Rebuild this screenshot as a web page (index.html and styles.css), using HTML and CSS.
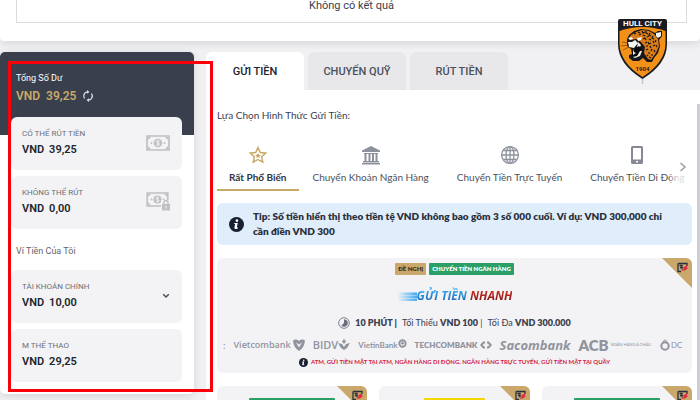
FILE: index.html
```html
<!DOCTYPE html>
<html lang="vi">
<head>
    <meta charset="UTF-8">
    <meta name="viewport" content="width=device-width, initial-scale=1.0">
    <title>Gửi Tiền</title>
    <link rel="stylesheet" href="styles.css">
</head>
<body>

    <!-- Shared icons -->
    <svg class="sprite" aria-hidden="true">
        <symbol id="money" viewBox="0 0 24 16">
            <path fill="none" stroke="currentColor" stroke-width="1.700" d="M1 1h22v14H1z"/>
            <path fill="currentColor" d="M2 2h3L2 5zM22 2h-3l3 3zM2 14h3l-3-3zM22 14h-3l3-3z"/>
            <circle cx="12" cy="8" r="4.3" fill="currentColor"/>
            <path d="M13.7 6.3c-.7-.8-3.3-.8-3.3.5 0 1.4 3.3.9 3.3 2.4 0 1.3-2.6 1.4-3.4.4M12 4.8v6.4" fill="none" stroke="#f3f3f5" stroke-width=".9"/>
            <circle cx="5.5" cy="8" r="1" fill="currentColor"/><circle cx="18.5" cy="8" r="1" fill="currentColor"/>
        </symbol>
        <symbol id="info" viewBox="0 0 16 16">
            <circle cx="8" cy="8" r="8" fill="#182033"/>
            <path fill="#fff" d="M8.500 2.500a1.400 1.400 0 1 1-.1 2.800 1.400 1.400 0 0 1 .1-2.800zM5.700 6.300h3.700l-1 4.400c-.1.6.2.7 1.200.2l-.3 1.300c-1.500 1-4 1-3.500-1.200l.8-3.500H5.500z"/>
        </symbol>
        <symbol id="corner" viewBox="0 0 30 30">
            <path d="M0 0h24a6 6 0 0 1 6 6v24z" fill="#caa76a"/>
            <path d="M16 5.500h9v2.500M16 5.500v8h3M17.500 7.500h2.500v2h-2M20 9.500v2" fill="none" stroke="#29303f" stroke-width="1.300"/>
            <path d="M25 7l-4.500 3 1.500.7-2.500 2.600 4.500-1.200.7-1.400 1.300-.2-1-1z" fill="#e02a45"/>
        </symbol>
    </svg>

    <section class="results">
        <div class="results-box">Không có kết quả</div>
    </section>

    <div class="layout">
        <aside class="wallet">
            <div class="wallet-head">
                <div class="wallet-title">Tổng Số Dư</div>
                <div class="wallet-total">
                    <span>VND</span><span>39,25</span>
                    <button class="refresh" type="button" aria-label="Làm mới">
                        <svg viewBox="0 0 12 12"><path d="M2.500 8.500A4.200 4.200 0 0 1 5.500 1.900M9.500 3.500A4.200 4.200 0 0 1 6.500 10.100" fill="none" stroke="#dfe1e6" stroke-width="1.300"/><path d="M5 0l2.500 1.900L5 3.800zM7 8.200L4.500 10.100 7 12z" fill="#dfe1e6"/></svg>
                    </button>
                </div>
            </div>
            <div class="wallet-body">
                <div class="balance">
                    <div>
                        <div class="balance-label">CÓ THỂ RÚT TIỀN</div>
                        <div class="balance-value"><span>VND</span><span>39,25</span></div>
                    </div>
                    <svg class="money" viewBox="0 0 24 16"><use href="#money"/></svg>
                </div>
                <div class="balance">
                    <div>
                        <div class="balance-label">KHÔNG THỂ RÚT</div>
                        <div class="balance-value"><span>VND</span><span>0,00</span></div>
                    </div>
                    <svg class="money money-locked" viewBox="0 0 24 19">
                        <use href="#money" width="23" height="15"/>
                        <path d="M15 8h9v11h-9z" fill="#f3f3f5"/>
                        <path d="M16 12h8v6.500h-8z" fill="currentColor"/>
                        <path d="M18 12v-1.500a2 2 0 0 1 4 0V12" fill="none" stroke="currentColor" stroke-width="1.300"/>
                        <path d="M20 14v2.500" stroke="#f3f3f5"/>
                    </svg>
                </div>
                <h2 class="wallet-subtitle">Ví Tiền Của Tôi</h2>
                <div class="balance">
                    <div>
                        <div class="balance-label">TÀI KHOẢN CHÍNH</div>
                        <div class="balance-value"><span>VND</span><span>10,00</span></div>
                    </div>
                    <button class="expand" type="button" aria-label="Mở rộng">
                        <svg viewBox="0 0 8 6"><path d="M1.200 1.200L4 4l2.800-2.800" fill="none" stroke="#4a4f5c" stroke-width="1.500"/></svg>
                    </button>
                </div>
                <div class="balance">
                    <div>
                        <div class="balance-label">M THỂ THAO</div>
                        <div class="balance-value"><span>VND</span><span>29,25</span></div>
                    </div>
                </div>
            </div>
        </aside>

        <main class="cashier">
            <nav class="tabs">
                <button class="tab active" type="button">GỬI TIỀN</button>
                <button class="tab" type="button">CHUYỂN QUỸ</button>
                <button class="tab" type="button">RÚT TIỀN</button>
            </nav>
            <div class="panel">
                <h1 class="panel-title">Lựa Chọn Hình Thức Gửi Tiền:</h1>

                <div class="methods-wrap">
                    <div class="methods">
                        <button class="method active" type="button">
                            <svg viewBox="0 0 20 20"><path d="M10 2.500l2.300 5 5.500.6-4.100 3.700 1.100 5.400-4.800-2.700-4.800 2.700 1.100-5.400-4.100-3.700 5.500-.6z" fill="none" stroke="#c9a55f" stroke-width="1.400"/><path d="M10 8l.9 1.700 1.900.2-1.400 1.300.4 1.900-1.800-1-1.800 1 .4-1.900-1.400-1.300 1.900-.2z" fill="#c9a55f"/></svg>
                            <span>Rất Phổ Biến</span>
                        </button>
                        <button class="method" type="button">
                            <svg viewBox="0 0 20 20"><path d="M1 5.500L10 1l9 4.500V7H1zM3 8h14v1H3zM3.500 9h2v7h-2zM7.500 9h2v7h-2zM11 9h2v7h-2zM14.500 9h2v7h-2zM2 16h16v1.500H2zM1 18h18v1.500H1z" fill="#8d919c"/></svg>
                            <span>Chuyển Khoản Ngân Hàng</span>
                        </button>
                        <button class="method" type="button">
                            <svg viewBox="0 0 20 20"><g fill="none" stroke="#8d919c" stroke-width="1.300"><circle cx="10" cy="10" r="8.400"/><ellipse cx="10" cy="10" rx="4" ry="8.400"/><path d="M10 1.500v17M1.500 10h17M3.200 5.500h13.600M3.200 14.500h13.600"/></g></svg>
                            <span>Chuyển Tiền Trực Tuyến</span>
                        </button>
                        <button class="method" type="button">
                            <svg viewBox="0 0 20 20"><path fill-rule="evenodd" d="M5.500 1h9a1.500 1.500 0 0 1 1.500 1.500v15a1.500 1.500 0 0 1-1.500 1.500h-9A1.500 1.500 0 0 1 4 17.500v-15A1.500 1.500 0 0 1 5.500 1zM6 3v11.500h8V3zM9 16v1.500h2V16z" fill="#858995"/></svg>
                            <span>Chuyển Tiền Di Động</span>
                        </button>
                    </div>
                    <button class="next" type="button" aria-label="Tiếp theo">
                        <svg viewBox="0 0 8 10"><path d="M1.500 1L6 5 1.500 9" fill="none" stroke="#9a9da5" stroke-width="1.500"/></svg>
                    </button>
                </div>

                <div class="tip">
                    <svg class="tip-icon"><use href="#info"/></svg>
                    <p>Tip: Số tiền hiển thị theo tiền tệ VND không bao gồm 3 số 000 cuối. Ví dụ: VND 300,000 chỉ cần điền VND 300</p>
                </div>

                <article class="offer">
                    <svg class="corner"><use href="#corner"/></svg>
                    <div class="badges">
                        <span class="badge gold">ĐỀ NGHỊ</span>
                        <span class="badge green">CHUYỂN TIỀN NGÂN HÀNG</span>
                    </div>
                    <div class="offer-logo">
                        <span class="speed"></span>
                        <span class="logo-blue">GỬI TIỀN</span>
                        <span class="logo-red">NHANH</span>
                    </div>
                    <div class="limits">
                        <svg viewBox="0 0 14 14"><circle cx="7" cy="7" r="6.200" fill="none" stroke="#6b707c"/><path d="M7 2.500A4.500 4.500 0 1 1 3.800 10.200L7 7z" fill="#6b707c"/></svg>
                        <b>10 PHÚT |</b>
                        <span>Tối Thiểu <b>VND 100</b> |</span>
                        <span>Tối Đa <b>VND 300.000</b></span>
                    </div>
                    <div class="banks">
                        <span class="bank">:</span>
                        <span class="bank vietcom">Vietcombank <svg viewBox="0 0 12 12"><path fill="currentColor" d="M0 1.500Q3-.5 6 2q3-2.500 6-.5-.5 7-6 10.500Q.5 8.500 0 1.500z"/><path d="M3 3.500l3 2 3-2-3 5z" fill="#f3f3f6"/></svg></span>
                        <span class="bank bidv">BIDV<svg viewBox="0 0 12 12"><path fill="currentColor" d="M6 0l2 2.500L6 5 4 2.500zM0 4l4 1 2 3 2-3 4-1-3 5-3 2-3-2z"/></svg></span>
                        <span class="bank vietin">VietinBank<svg viewBox="0 0 12 12"><circle cx="6" cy="6" r="4.300" fill="none" stroke="currentColor" stroke-width="2.500"/><path d="M6 3l2.500 3L6 7.500 3.500 6z" fill="currentColor"/></svg></span>
                        <span class="bank techcom">TECHCOMBANK <svg viewBox="0 0 12 8"><path fill="none" stroke="currentColor" stroke-width="2" d="M5 1.500H3.500L1.300 4l2.200 2.500H5M7 1.500h1.500L10.700 4 8.500 6.500H7"/></svg></span>
                        <span class="bank sacom">Sacombank</span>
                        <span class="bank acb">ACB <small>NGÂN HÀNG Á CHÂU</small></span>
                        <span class="bank dong"><svg viewBox="0 0 12 12"><circle cx="6" cy="7" r="3.700" fill="none" stroke="currentColor" stroke-width="2"/><path d="M3.500 3L6 .8 8.500 3" fill="none" stroke="currentColor"/></svg>DC</span>
                    </div>
                    <div class="notice">
                        <svg><use href="#info"/></svg>
                        <span>ATM, GỬI TIỀN MẶT TẠI ATM, NGÂN HÀNG DI ĐỘNG, NGÂN HÀNG TRỰC TUYẾN, GỬI TIỀN MẶT TẠI QUẦY</span>
                    </div>
                </article>

                <div class="offer-grid">
                    <article class="mini"><svg class="corner"><use href="#corner"/></svg><span class="strip strip-green"></span></article>
                    <article class="mini"><svg class="corner"><use href="#corner"/></svg><span class="strip strip-yellow"></span></article>
                    <article class="mini"><svg class="corner"><use href="#corner"/></svg><span class="strip strip-green"></span></article>
                </div>
            </div>
        </main>
        <div class="scroll-track"><div class="scroll-thumb"></div></div>
    </div>

    <div class="highlight"></div>

    <!-- Club crest -->
    <svg class="crest" viewBox="0 0 49 65" role="img" aria-label="Hull City 1904">
        <path d="M24.500 57v8" stroke="#c4c5c9" stroke-width="1.500"/>
        <path d="M2 0h45a2 2 0 0 1 2 2v23q0 20-24.500 35Q0 45 0 25V2a2 2 0 0 1 2-2z" fill="#191b20"/>
        <path d="M1.500 12Q24.500 4 47.500 12v13Q47 43.500 24.500 58 2 43.500 1.500 25z" fill="#f39018"/>
        <text x="24.500" y="7" text-anchor="middle" class="crest-name">HULL CITY</text>
        <!-- head -->
        <path d="M9 20l2-4 5-4 7-2 8 1 6 3 3-2h4l0 5-3 4 1 6-2 7-4 5-2 4-5 0-4-4-4 3-6 0-4-3 0-3 3-1-1-5-4-3z" fill="#17181c"/>
        <path d="M11 19l2-3 5-3 6-2 7 1 5 3 4 5 1 7-3 7-3 4-2 3-3-1-4-6 1-6-4-5-5-3-6 1z" fill="#d97b18"/>
        <!-- ear, brow and muzzle -->
        <path d="M38 14l5-1 0 4-3 2-2-2z" fill="#f6f5f0"/>
        <path d="M10 19l4-1 1 2-3 1zM19 19l5-1-1 3-3 1zM10 23l4 0 3-2 3 3-4 5-5-1zM20 23l3 3-1 2-3 1z" fill="#f6f5f0"/>
        <path d="M15 31l6-4 2 2-1 5-4 4-4-2z" fill="#07080b"/>
        <path d="M15 30l1 3 2 1-3 2zM22 32l2 0-2 5-5 2-2-1 4-1z" fill="#f2eee5"/>
        <!-- spots -->
        <path d="M16 15l2-1M20 13l2 1M21 16l2-1M24 12l1 2 2-1M28 12l0 2 2 1M32 14l-1 2 2 1M25 16l2 1M29 18l2-1M25 20l2-1 1 2M31 20l2 1M35 17l-1 2 2 1M27 24l2-1M30 23l1 2 2-1M35 22l1 2M38 21l-1 2M28 27l2 0M32 27l1 2M35 27l2-1M38 26l1 2M28 31l2-1M30 34l2 0M33 32l1-2M36 31l1 2M29 36l1 1M33 36l2 0M31 38l2 1" fill="none" stroke="#17181c" stroke-width="1.200"/>
        <path d="M4 23l6 1M3 27l8-1M5 31l6-3" fill="none" stroke="#56391b" stroke-width=".6"/>
        <text x="24.500" y="52" text-anchor="middle" class="crest-year">1904</text>
    </svg>

</body>
</html>
```
FILE: styles.css
```css
* { box-sizing: border-box; }
body {
    margin: 0;
    height: 100vh;
    overflow: hidden;
    position: relative;
    font-family: Lato, "Noto Sans", sans-serif;
    font-size: 10px;
    color: #3a404d;
    background: #f1f1f4;
}
h1, h2, p { margin: 0; font-weight: 400; }
button {
    border: 0;
    padding: 0;
    background: none;
    font: inherit;
    color: inherit;
    cursor: pointer;
}
svg { display: block; flex: none; }
.sprite { position: absolute; width: 0; height: 0; }

/* Results */
.results {
    padding: 0 13px 18px 16px;
    background: #fff;
    border-radius: 0 0 4px 4px;
    box-shadow: 0 2px 8px rgba(0, 0, 0, 0.12);
}
.results-box {
    padding-bottom: 11px;
    font-family: Roboto, sans-serif;
    font-size: 11px;
    line-height: 11px;
    text-align: center;
    border: 1px solid #dcdcde;
    border-top: 0;
}

.layout {
    display: flex;
    align-items: flex-start;
    margin-top: 11px;
}

/* Wallet */
.wallet {
    width: 28%;
    max-width: 194px;
    flex: none;
    margin-right: 12px;
    padding-bottom: 12px;
    background: #fff;
    border-radius: 5px;
    box-shadow: 0 2px 8px rgba(0, 0, 0, 0.12);
    font-family: Roboto, sans-serif;
}
.wallet-head {
    padding: 20px 16px 30px;
    background: #3a3f4e;
    border-radius: 5px 5px 0 0;
    color: #fff;
}
.wallet-title { font-size: 9px; line-height: 12px; }
.wallet-total {
    display: flex;
    align-items: center;
    gap: 6px;
    margin-top: 3px;
    font-size: 12px;
    line-height: 18px;
    font-weight: 600;
    color: #c9a968;
}
.refresh svg { width: 12px; height: 12px; }
.wallet-body {
    display: flex;
    flex-direction: column;
    gap: 6px;
    margin-top: -18px;
    padding: 0 12px 0 11px;
}
.balance {
    display: flex;
    align-items: center;
    justify-content: space-between;
    padding: 10px 12px 12px 11px;
    background: #f3f3f5;
    border-radius: 6px;
}
.balance-label { font-size: 8px; line-height: 14px; color: #6c6f78; }
.balance-value {
    display: flex;
    gap: 5px;
    font-size: 11px;
    line-height: 17px;
    font-weight: 600;
    color: #20242d;
}
.money { width: 24px; height: 16px; color: #bfc0c4; }
.money-locked { height: 19px; }
.wallet-subtitle { padding: 9px 5px 6px; font-size: 9px; line-height: 14px; color: #61656e; }
.expand svg { width: 8px; height: 6px; }

/* Cashier */
.cashier { flex: 1; min-width: 0; }
.tabs { display: flex; gap: 4px; }
.tab {
    flex: 0 1 98px;
    height: 38px;
    background: #e8e8ea;
    border-radius: 6px 6px 0 0;
    font-family: Roboto, sans-serif;
    font-size: 11px;
    font-weight: 500;
    color: #4b505d;
}
.tab.active { background: #fff; color: #20242d; }
.panel { padding: 17px 5px 0 11px; background: #fff; }
.panel-title { font-size: 10px; line-height: 16px; }
.methods-wrap { position: relative; margin-top: 22px; overflow: hidden; }
.methods { display: flex; }
.method {
    display: flex;
    flex: none;
    flex-direction: column;
    align-items: center;
    gap: 5px;
    padding: 0 14px 5px;
    line-height: 14px;
    white-space: nowrap;
    border-bottom: 2px solid transparent;
    color: #4c515d;
}
.method.active { padding: 0 12px 5px; font-weight: 700; color: #30353f; border-color: #c9a968; }
.method svg { width: 20px; height: 20px; }
.next {
    position: absolute;
    right: 0;
    top: 0;
    width: 22px;
    height: 44px;
    padding-left: 9px;
    background: linear-gradient(90deg, rgba(255, 255, 255, 0.3), rgba(255, 255, 255, 0.8) 40%);
}
.next svg { width: 8px; height: 10px; }
.tip {
    display: flex;
    align-items: center;
    gap: 9px;
    margin-top: 12px;
    padding: 6px 18px 6px 12px;
    background: #e0edfa;
    border-radius: 6px;
    line-height: 15px;
    color: #2a303c;
}
.tip p { font-weight: 800; }
.tip-icon { width: 15px; height: 15px; }

/* Offers */
.offer {
    position: relative;
    display: flex;
    flex-direction: column;
    align-items: center;
    margin-top: 13px;
    padding: 5px 6px 5px;
    background: #f3f3f6;
    border-radius: 6px;
}
.corner { position: absolute; top: 0; right: 0; width: 30px; height: 30px; }
.badges { display: flex; gap: 3px; }
.badge { padding: 0 3px; line-height: 12px; border-radius: 1px; font-size: 6px; font-weight: 800; }
.gold { background: #caa76a; color: #3b3426; }
.green { background: #2c9f67; color: #fff; }
.offer-logo {
    display: flex;
    align-items: center;
    gap: 3px;
    margin-top: 12px;
    font-family: "Open Sans", sans-serif;
    font-size: 12px;
    line-height: 18px;
    font-weight: 700;
    font-style: italic;
}
.speed {
    width: 20px;
    height: 9px;
    margin-right: -3px;
    background: repeating-linear-gradient(0deg, transparent 0 2px, rgba(243, 243, 246, 0.4) 2px 3px), linear-gradient(90deg, #f3f3f6, #44aaf0);
}
.logo-blue, .logo-red { -webkit-background-clip: text; background-clip: text; color: transparent; }
.logo-blue { background-image: linear-gradient(#35a5ee 20%, #174f9c); }
.logo-red { background-image: linear-gradient(#c22a20 30%, #650b0c); }
.limits {
    display: flex;
    align-items: center;
    gap: 5px;
    margin-top: 11px;
    font-size: 9px;
    line-height: 14px;
}
.limits b { font-weight: 800; }
.limits svg { width: 12px; height: 12px; }
.banks {
    display: flex;
    align-items: center;
    gap: 8px;
    align-self: stretch;
    height: 22px;
    margin-top: 4px;
    overflow: hidden;
    color: #92949d;
}
.bank { display: flex; flex: none; align-items: center; gap: 2px; line-height: 16px; white-space: nowrap; }
.bank svg { width: 12px; height: 12px; }
.vietcom { font-family: "Open Sans", sans-serif; font-size: 9px; font-weight: 600; }
.bidv { font-family: "Open Sans", sans-serif; font-size: 11px; font-weight: 600; gap: 0; }
.vietin { font-size: 8px; font-weight: 700; gap: 0; }
.vietin svg { width: 9px; height: 9px; margin-bottom: 4px; }
.techcom { font-size: 8px; font-weight: 800; }
.techcom svg { height: 8px; }
.sacom { font-family: "Noto Sans", sans-serif; font-size: 13px; font-weight: 700; font-style: italic; }
.acb { font-size: 15px; font-weight: 800; }
.acb small { font-size: 4px; font-weight: 400; }
.dong { font-size: 8px; gap: 0; }
.notice {
    display: flex;
    align-items: center;
    gap: 3px;
    font-size: 6px;
    line-height: 12px;
    font-weight: 700;
    color: #d0213f;
}
.notice svg { width: 9px; height: 9px; }
.offer-grid {
    display: grid;
    grid-template-columns: repeat(3, 1fr);
    gap: 12px;
    margin-top: 13px;
}
.mini {
    position: relative;
    height: 90px;
    padding: 12px 32px 0;
    background: #f3f3f6;
    border-radius: 6px;
}
.strip { display: block; height: 12px; border-radius: 1px; }
.strip-green { background: #2c9f67; }
.strip-yellow { margin: 0 13px; background: #f2d800; }

.scroll-track { align-self: stretch; width: 3px; padding-top: 38px; }
.scroll-thumb { height: 100%; border-top: 14px solid #fff; background: #cdced3; }

/* Overlays */
.highlight {
    position: absolute;
    left: 8px;
    top: 61px;
    width: 205px;
    height: 331px;
    border: 3px solid #fa0009;
    pointer-events: none;
}
.crest {
    position: absolute;
    top: 19px;
    right: 33px;
    width: 49px;
    height: 65px;
}
.crest-name { font: 700 8px Roboto, sans-serif; fill: #fff; }
.crest-year { font: 700 6px Roboto, sans-serif; fill: #292017; }
```
